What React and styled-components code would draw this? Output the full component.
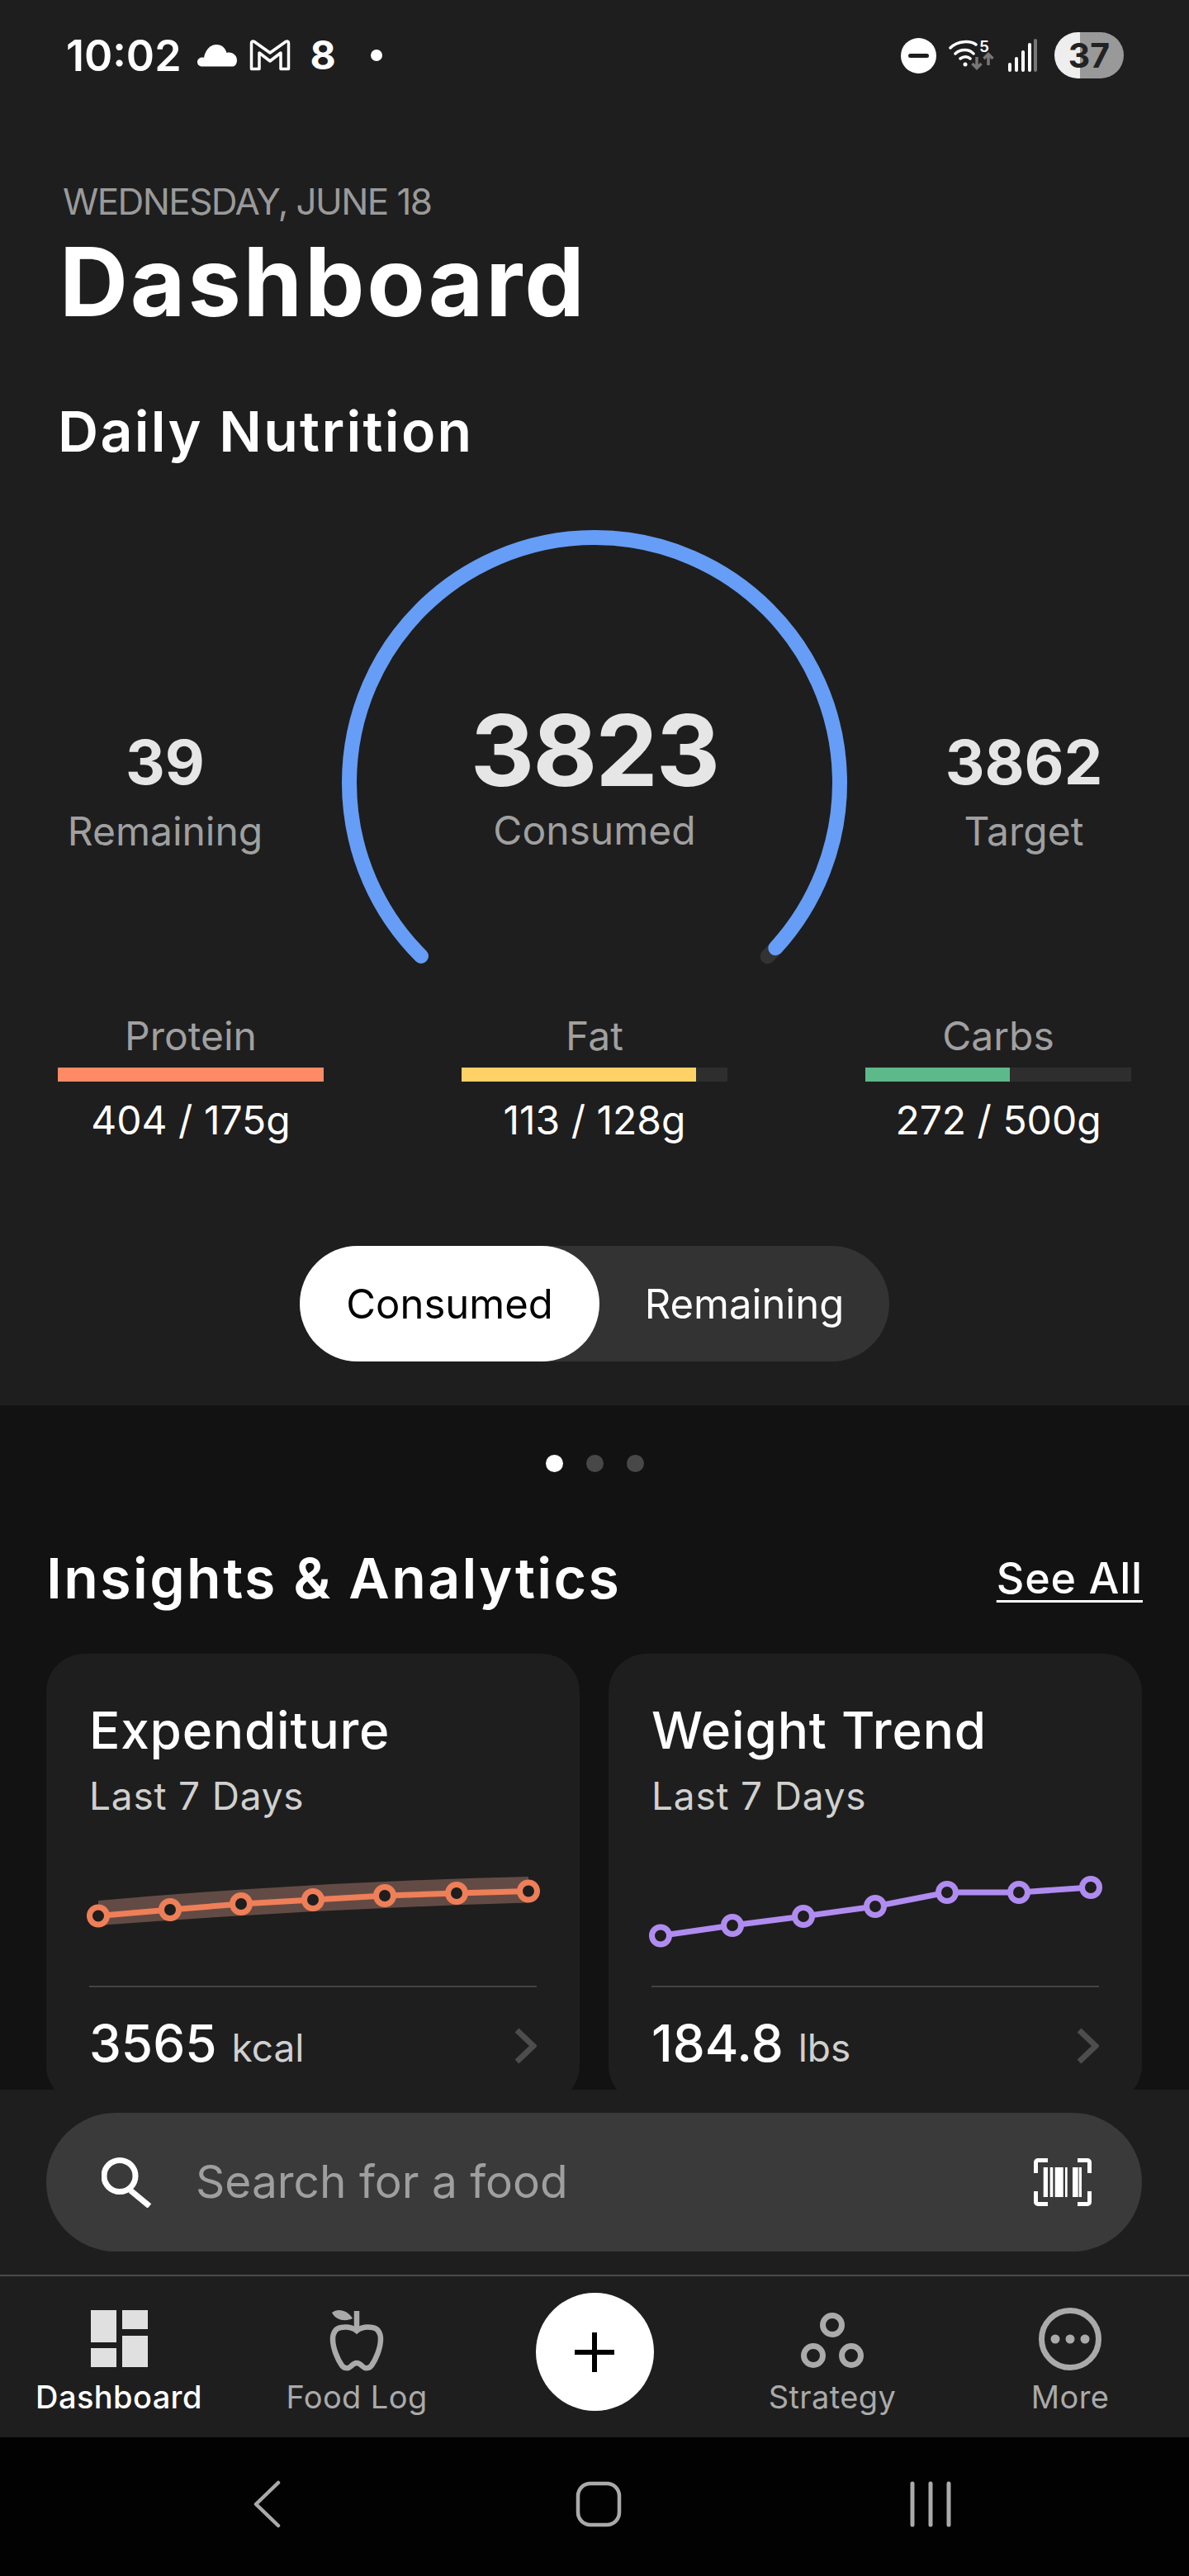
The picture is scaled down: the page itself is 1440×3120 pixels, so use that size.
import styled, { createGlobalStyle } from 'styled-components';

const GlobalStyle = createGlobalStyle`
  html, body {
    margin: 0;
    padding: 0;
    background: #000;
  }
  * {
    box-sizing: border-box;
  }
`;

const Page = styled.div`
  display: flex;
  flex-direction: column;
  width: 1440px;
  height: 3120px;
  overflow: hidden;
  font-family: Inter, 'Liberation Sans', sans-serif;
  color: #fff;
`;

const TopPanel = styled.section`
  flex: none;
  height: 1702px;
  background: #1e1e1e;
`;

const StatusBar = styled.div`
  display: flex;
  justify-content: space-between;
  align-items: center;
  height: 134px;
  padding: 0 79px 0 80px;
`;

const StatusGroup = styled.div`
  display: flex;
  align-items: center;
`;

const Clock = styled.span`
  font-size: 52px;
  font-weight: 600;
  margin-right: 18px;
`;

const MailIcon = styled.svg`
  margin-left: 14px;
`;

const NoteDigit = styled.span`
  font-size: 48px;
  font-weight: 700;
  line-height: 1;
  margin: 0 42px 0 24px;
`;

const WifiBox = styled.div`
  position: relative;
  width: 62px;
  height: 42px;
  margin: 0 10px 0 15px;
`;

const WifiDigit = styled.span`
  position: absolute;
  top: -1px;
  right: 13px;
  font-size: 19px;
  font-weight: 600;
`;

const Battery = styled.div`
  display: flex;
  justify-content: center;
  align-items: center;
  width: 84px;
  height: 56px;
  margin-left: 20px;
  border-radius: 28px;
  background: linear-gradient(90deg, #eeeeee 37%, #999999 37%);
  color: #222;
  font-size: 41px;
  font-weight: 700;
`;

const Header = styled.header`
  padding: 84px 0 0 76px;
`;

const DateLine = styled.div`
  font-size: 44px;
  line-height: 52px;
  color: #9a9a9a;
  letter-spacing: -1.6px;
`;

const Title = styled.h1`
  margin: 12px 0 0 -4px;
  font-size: 115px;
  line-height: 120px;
  font-weight: 700;
  letter-spacing: 2.8px;
`;

const SectionTitle = styled.h2`
  margin: 80px 0 0 70px;
  font-size: 68px;
  line-height: 80px;
  font-weight: 600;
  letter-spacing: 2.3px;
`;

const GaugeRow = styled.div`
  display: grid;
  grid-template-columns: 400px 640px 400px;
  margin-top: 68px;
  height: 560px;
`;

const GaugeStack = styled.div`
  display: grid;
  justify-items: center;

  & > * {
    grid-area: 1 / 1;
  }
`;

const Stat = styled.div`
  display: flex;
  flex-direction: column;
  align-items: center;
  padding-top: ${(p) => (p.$main ? 214 : 251)}px;
`;

const StatValue = styled.div`
  font-size: ${(p) => (p.$main ? 120 : 74)}px;
  line-height: ${(p) => (p.$main ? 130 : 84)}px;
  margin-bottom: ${(p) => (p.$main ? 2 : 12)}px;
  letter-spacing: ${(p) => (p.$main ? -2 : 0)}px;
  font-weight: 700;
  color: #e6e6e6;
`;

const StatLabel = styled.div`
  font-size: 48px;
  line-height: 60px;
  color: #a0a0a0;
`;

const MacroRow = styled.div`
  display: grid;
  grid-template-columns: repeat(3, 322px);
  column-gap: 167px;
  margin-top: 37px;
  padding-left: 70px;
`;

const Macro = styled.div`
  text-align: center;
`;

const MacroName = styled.div`
  font-size: 48px;
  line-height: 56px;
  color: #a0a0a0;
`;

const MacroTrack = styled.div`
  height: 17px;
  margin-top: 10px;
  background: #2e2e2e;
`;

const MacroFill = styled.div`
  height: 100%;
  background: ${(p) => p.$color};
`;

const MacroValue = styled.div`
  margin-top: 18px;
  font-size: 48px;
  line-height: 58px;
`;

const Toggle = styled.div`
  display: flex;
  width: 714px;
  height: 140px;
  margin: 123px auto 0;
  border-radius: 70px;
  background: #333;
`;

const ToggleOption = styled.div`
  display: flex;
  justify-content: center;
  align-items: center;
  flex: ${(p) => (p.$active ? '0 0 363px' : '1')};
  border-radius: 70px;
  background: ${(p) => (p.$active ? '#fff' : 'transparent')};
  color: ${(p) => (p.$active ? '#000' : '#fff')};
  font-size: 49px;
  font-weight: 400;
`;

const LowerPanel = styled.section`
  flex: none;
  height: 829px;
  overflow: hidden;
  background: #121212;
`;

const Dots = styled.div`
  display: flex;
  justify-content: center;
  gap: 28px;
  padding-top: 60px;
`;

const Dot = styled.span`
  width: 21px;
  height: 21px;
  border-radius: 50%;
  background: ${(p) => (p.$active ? '#fff' : '#484848')};
`;

const InsightsHead = styled.div`
  display: flex;
  justify-content: space-between;
  align-items: center;
  margin-top: 88px;
  padding: 0 56px;
`;

const InsightsTitle = styled.h2`
  margin: 0;
  font-size: 68px;
  line-height: 80px;
  font-weight: 600;
  letter-spacing: 2.4px;
`;

const SeeAll = styled.a`
  font-size: 52px;
  font-weight: 500;
  letter-spacing: 0.8px;
  color: #fff;
  text-decoration: underline;
  text-underline-offset: 8px;
  text-decoration-thickness: 3px;
`;

const Cards = styled.div`
  display: grid;
  grid-template-columns: 646px 646px;
  column-gap: 35px;
  margin-top: 52px;
  padding-left: 56px;
`;

const Card = styled.article`
  height: 545px;
  padding: 55px 52px 0;
  border-radius: 46px;
  background: #1e1e1e;
`;

const CardTitle = styled.div`
  font-size: 62px;
  line-height: 76px;
  font-weight: 500;
  letter-spacing: 0.8px;
`;

const CardSub = styled.div`
  margin-top: 13px;
  font-size: 46px;
  line-height: 56px;
  letter-spacing: 0.8px;
  color: #d0d0d0;
`;

const ChartSvg = styled.svg`
  display: block;
  width: 560px;
  height: 100px;
  margin: 56px 0 0 -7px;
  overflow: visible;
`;

const CardRule = styled.div`
  height: 2px;
  margin-top: 46px;
  background: #444;
`;

const CardFoot = styled.div`
  display: flex;
  justify-content: space-between;
  align-items: center;
  margin-top: 32px;
`;

const CardValue = styled.div`
  font-size: 62px;
  line-height: 72px;
  font-weight: 500;
`;

const CardUnit = styled.span`
  margin-left: 18px;
  font-size: 46px;
  font-weight: 400;
  color: #d0d0d0;
`;

const BottomPanel = styled.section`
  flex: none;
  height: 421px;
  padding-top: 28px;
  background: #1e1e1e;
`;

const SearchBar = styled.div`
  display: flex;
  justify-content: space-between;
  align-items: center;
  height: 168px;
  margin: 0 57px 28px 56px;
  padding: 0 61px 0 67px;
  border-radius: 84px;
  background: #3a3a3a;
`;

const SearchLeft = styled.div`
  display: flex;
  align-items: center;
  gap: 52px;
`;

const SearchText = styled.span`
  margin-bottom: 2px;
  font-size: 55px;
  color: #9f9f9f;
`;

const NavBar = styled.nav`
  display: grid;
  grid-template-columns: repeat(5, 288px);
  height: 197px;
  border-top: 2px solid #4a4a4a;
`;

const NavItem = styled.div`
  display: flex;
  flex-direction: column;
  align-items: center;
  padding-top: ${(p) => (p.$raised ? 20 : 38)}px;
`;

const NavIcon = styled.svg`
  display: block;
  height: 80px;
  margin-bottom: 5px;
  color: ${(p) => (p.$active ? '#e0e0e0' : '#aaaaaa')};
`;

const NavLabel = styled.span`
  font-size: 38px;
  line-height: 46px;
  letter-spacing: 0.4px;
  font-weight: ${(p) => (p.$active ? 500 : 400)};
  color: ${(p) => (p.$active ? '#fff' : '#aaaaaa')};
`;

const AddButton = styled.div`
  display: flex;
  justify-content: center;
  align-items: center;
  width: 143px;
  height: 143px;
  border-radius: 50%;
  background: #fff;
`;

const SystemNav = styled.div`
  display: grid;
  flex: 1;
  grid-template-columns: repeat(3, 402px);
  justify-content: center;
  justify-items: center;
  align-items: center;
  padding: 0 0 7px 10px;
  background: #020202;
`;

const GaugeArc = () => {
  const cx = 320;
  const cy = 318;
  const r = 297;
  const len = 2 * Math.PI * r;
  const sweep = 0.75 * len;
  const done = sweep * (3823 / 3862);
  return (
    <svg width="640" height="560" viewBox="0 0 640 560" fill="none">
      <circle
        cx={cx}
        cy={cy}
        r={r}
        stroke="#333"
        strokeWidth="18"
        strokeLinecap="round"
        strokeDasharray={`${sweep} ${len}`}
        transform={`rotate(135 ${cx} ${cy})`}
      />
      <circle
        cx={cx}
        cy={cy}
        r={r}
        stroke="#669DF6"
        strokeWidth="18"
        strokeLinecap="round"
        strokeDasharray={`${done} ${len}`}
        transform={`rotate(135 ${cx} ${cy})`}
      />
    </svg>
  );
};

const xs = [18, 105, 191, 278, 365, 452, 539];

const TrendChart = ({ ys, color, band }) => (
  <ChartSvg viewBox="0 0 560 100" fill="none">
    {band && <path d={band} fill="#634b45" />}
    <polyline
      points={xs.map((x, i) => `${x},${ys[i]}`).join(' ')}
      stroke={color}
      strokeWidth="7"
    />
    {xs.map((x, i) => (
      <circle key={x} cx={x} cy={ys[i]} r="10.5" fill="#1e1e1e" stroke={color} strokeWidth="7" />
    ))}
  </ChartSvg>
);

const Chevron = () => (
  <svg width="27" height="44" viewBox="0 0 27 44" fill="none">
    <path d="M3 3l20 19L3 41" stroke="#4d4d4d" strokeWidth="7" />
  </svg>
);

const trends = [
  {
    title: 'Expenditure',
    value: '3565',
    unit: 'kcal',
    color: '#ee7f58',
    ys: [61.5, 54, 47, 42, 37, 34, 31.5],
    band: 'M18 43Q280 20 539 14L539 45.6Q280 53 18 73Z',
  },
  {
    title: 'Weight Trend',
    value: '184.8',
    unit: 'lbs',
    color: '#b08cf0',
    ys: [85.5, 73, 62, 50, 33, 33, 27],
  },
];

const macros = [
  { name: 'Protein', value: '404 / 175g', pct: 100, color: '#ff8a65' },
  { name: 'Fat', value: '113 / 128g', pct: 88.3, color: '#ffd166' },
  { name: 'Carbs', value: '272 / 500g', pct: 54.4, color: '#5db98a' },
];

const App = () => {
  return (
    <Page>
      <GlobalStyle />
      <TopPanel>
        <StatusBar>
          <StatusGroup>
            <Clock>10:02</Clock>
            <svg width="50" height="28" viewBox="0 0 50 28" fill="#fff">
              <path d="M7 27.5C3 27.5 1 25 1 22c0-3 2.500-5.500 6-5.500 1 0 1.500.2 2 .4C10.500 8 16.500 1 24 1c6.500 0 11 4 12.500 10 1-.3 1.800-.4 2.800-.4 5 0 9.700 3.900 9.700 9.400 0 4.500-2.500 7.500-5 7.500z" />
            </svg>
            <MailIcon width="50" height="38" viewBox="0 0 50 38" fill="none">
              <path
                d="M2.500 35.500V4c0-2 2-2.500 3.500-1.500L25 16 44 2.500c1.500-1 3.500-.5 3.500 1.500v31.500H38V16L25 26 12 16v19.500z"
                stroke="#fff"
                strokeWidth="3.500"
                strokeLinejoin="round"
              />
            </MailIcon>
            <NoteDigit>8</NoteDigit>
            <svg width="14" height="14" viewBox="0 0 14 14" fill="#fff">
              <circle cx="7" cy="7" r="7" />
            </svg>
          </StatusGroup>
          <StatusGroup>
            <svg width="43" height="43" viewBox="0 0 43 43">
              <circle cx="21.500" cy="21.500" r="21.500" fill="#fff" />
              <rect x="9" y="19" width="25" height="5" rx="2.500" fill="#1e1e1e" />
            </svg>
            <WifiBox>
              <svg width="62" height="42" viewBox="0 0 62 42" fill="none">
                <path
                  d="M2 12C11 3 26 3 33 8M8 19c6-6 17-6 22 0M14 25c4-3 9-3 12 0"
                  stroke="#fff"
                  strokeWidth="3.500"
                  strokeLinecap="round"
                />
                <circle cx="20" cy="32" r="2.500" fill="#fff" />
                <path d="M34 23v13M28.500 31l5.500 5.500 5.500-5.500M48 33V20M42.500 25l5.500-5.500 5.500 5.500" stroke="#777" strokeWidth="3.500" />
              </svg>
              <WifiDigit>5</WifiDigit>
            </WifiBox>
            <svg width="36" height="40" viewBox="0 0 36 40" strokeWidth="4" strokeLinecap="round">
              <path d="M2 38v-7M10 38V24M18 38V16M26 38V7" stroke="#fff" />
              <path d="M33 38V2" stroke="#777" />
            </svg>
            <Battery>37</Battery>
          </StatusGroup>
        </StatusBar>

        <Header>
          <DateLine>WEDNESDAY, JUNE 18</DateLine>
          <Title>Dashboard</Title>
        </Header>
        <SectionTitle>Daily Nutrition</SectionTitle>

        <GaugeRow>
          <Stat>
            <StatValue>39</StatValue>
            <StatLabel>Remaining</StatLabel>
          </Stat>
          <GaugeStack>
            <GaugeArc />
            <Stat $main>
              <StatValue $main>3823</StatValue>
              <StatLabel>Consumed</StatLabel>
            </Stat>
          </GaugeStack>
          <Stat>
            <StatValue>3862</StatValue>
            <StatLabel>Target</StatLabel>
          </Stat>
        </GaugeRow>

        <MacroRow>
          {macros.map((m) => (
            <Macro key={m.name}>
              <MacroName>{m.name}</MacroName>
              <MacroTrack>
                <MacroFill $color={m.color} style={{ width: `${m.pct}%` }} />
              </MacroTrack>
              <MacroValue>{m.value}</MacroValue>
            </Macro>
          ))}
        </MacroRow>

        <Toggle>
          <ToggleOption $active>Consumed</ToggleOption>
          <ToggleOption>Remaining</ToggleOption>
        </Toggle>
      </TopPanel>

      <LowerPanel>
        <Dots>
          <Dot $active />
          <Dot />
          <Dot />
        </Dots>
        <InsightsHead>
          <InsightsTitle>Insights &amp; Analytics</InsightsTitle>
          <SeeAll>See All</SeeAll>
        </InsightsHead>
        <Cards>
          {trends.map((t) => (
            <Card key={t.title}>
              <CardTitle>{t.title}</CardTitle>
              <CardSub>Last 7 Days</CardSub>
              <TrendChart ys={t.ys} color={t.color} band={t.band} />
              <CardRule />
              <CardFoot>
                <CardValue>
                  {t.value}
                  <CardUnit>{t.unit}</CardUnit>
                </CardValue>
                <Chevron />
              </CardFoot>
            </Card>
          ))}
        </Cards>
      </LowerPanel>

      <BottomPanel>
        <SearchBar>
          <SearchLeft>
            <svg width="62" height="62" viewBox="0 0 62 62" fill="none" stroke="#fff" strokeWidth="7">
              <circle cx="22" cy="23.500" r="19" />
              <path d="M35 41l23 19" />
            </svg>
            <SearchText>Search for a food</SearchText>
          </SearchLeft>
          <svg width="70" height="58" viewBox="0 0 70 58" fill="none">
            <path
              d="M17 2.500H5a2.500 2.500 0 0 0-2.500 2.500v13M53 2.500h12a2.500 2.500 0 0 1 2.500 2.500v13M17 55.500H5A2.500 2.500 0 0 1 2.500 53V40M53 55.500h12a2.500 2.500 0 0 0 2.500-2.500V40"
              stroke="#fff"
              strokeWidth="5"
            />
            <path
              d="M11.700 11H17v36h-5.300zM19.700 11h3.600v36h-3.600zM25.700 11h10v36h-10zM38 11h2.700v36H38zM47 11h6.700v36H47zM54.700 11H58v36h-3.300z"
              fill="#fff"
            />
          </svg>
        </SearchBar>

        <NavBar>
          <NavItem>
            <NavIcon $active width="69" viewBox="0 0 69 80" fill="currentColor">
              <path d="M0 3h31v39H0zM38 3h31v23H38zM0 49h31v23H0zM38 34h31v38H38z" />
            </NavIcon>
            <NavLabel $active>Dashboard</NavLabel>
          </NavItem>
          <NavItem>
            <NavIcon width="66" viewBox="0 0 66 80" fill="none" stroke="currentColor" strokeWidth="6.500">
              <path d="M33 28C28 24 20 23 14 24 7 25 4 31 4 38c0 11 6 25 11 32 3 4 8 4 11 1 3-3 5-4 7-4s4 1 7 4c3 3 8 3 11-1 5-7 11-21 11-32 0-7-3-13-10-14-6-1-14 0-19 4z" />
              <path d="M33 4v24" />
              <path d="M3 6c7-6 19-3 25 7C20 17 8 16 3 6z" fill="currentColor" stroke="none" />
            </NavIcon>
            <NavLabel>Food Log</NavLabel>
          </NavItem>
          <NavItem $raised>
            <AddButton>
              <svg width="50" height="50" viewBox="0 0 50 50" stroke="#000" strokeWidth="6">
                <path d="M25 1v48M1 25h48" />
              </svg>
            </AddButton>
          </NavItem>
          <NavItem>
            <NavIcon width="76" viewBox="0 0 76 80" fill="none" stroke="currentColor" strokeWidth="7">
              <circle cx="38" cy="21" r="11.500" />
              <circle cx="15" cy="58" r="11.500" />
              <circle cx="61" cy="58" r="11.500" />
            </NavIcon>
            <NavLabel>Strategy</NavLabel>
          </NavItem>
          <NavItem>
            <NavIcon width="76" viewBox="0 0 76 80" fill="none" stroke="currentColor" strokeWidth="7">
              <circle cx="38" cy="38" r="34.500" />
              <circle cx="20" cy="38" r="5.500" fill="currentColor" stroke="none" />
              <circle cx="38" cy="38" r="5.500" fill="currentColor" stroke="none" />
              <circle cx="56" cy="38" r="5.500" fill="currentColor" stroke="none" />
            </NavIcon>
            <NavLabel>More</NavLabel>
          </NavItem>
        </NavBar>
      </BottomPanel>

      <SystemNav>
        <svg width="34" height="58" viewBox="0 0 34 58" fill="none" stroke="#aaa" strokeWidth="4.500" strokeLinecap="round" strokeLinejoin="round">
          <path d="M31 3L4 29l27 26" />
        </svg>
        <svg width="56" height="58" viewBox="0 0 56 58" fill="none" stroke="#aaa" strokeWidth="4.500">
          <rect x="3" y="4" width="50" height="50" rx="15" />
        </svg>
        <svg width="50" height="56" viewBox="0 0 50 56" fill="none" stroke="#aaa" strokeWidth="5" strokeLinecap="round">
          <path d="M3 3v50M25 3v50M47 3v50" />
        </svg>
      </SystemNav>
    </Page>
  );
};

export default App;
